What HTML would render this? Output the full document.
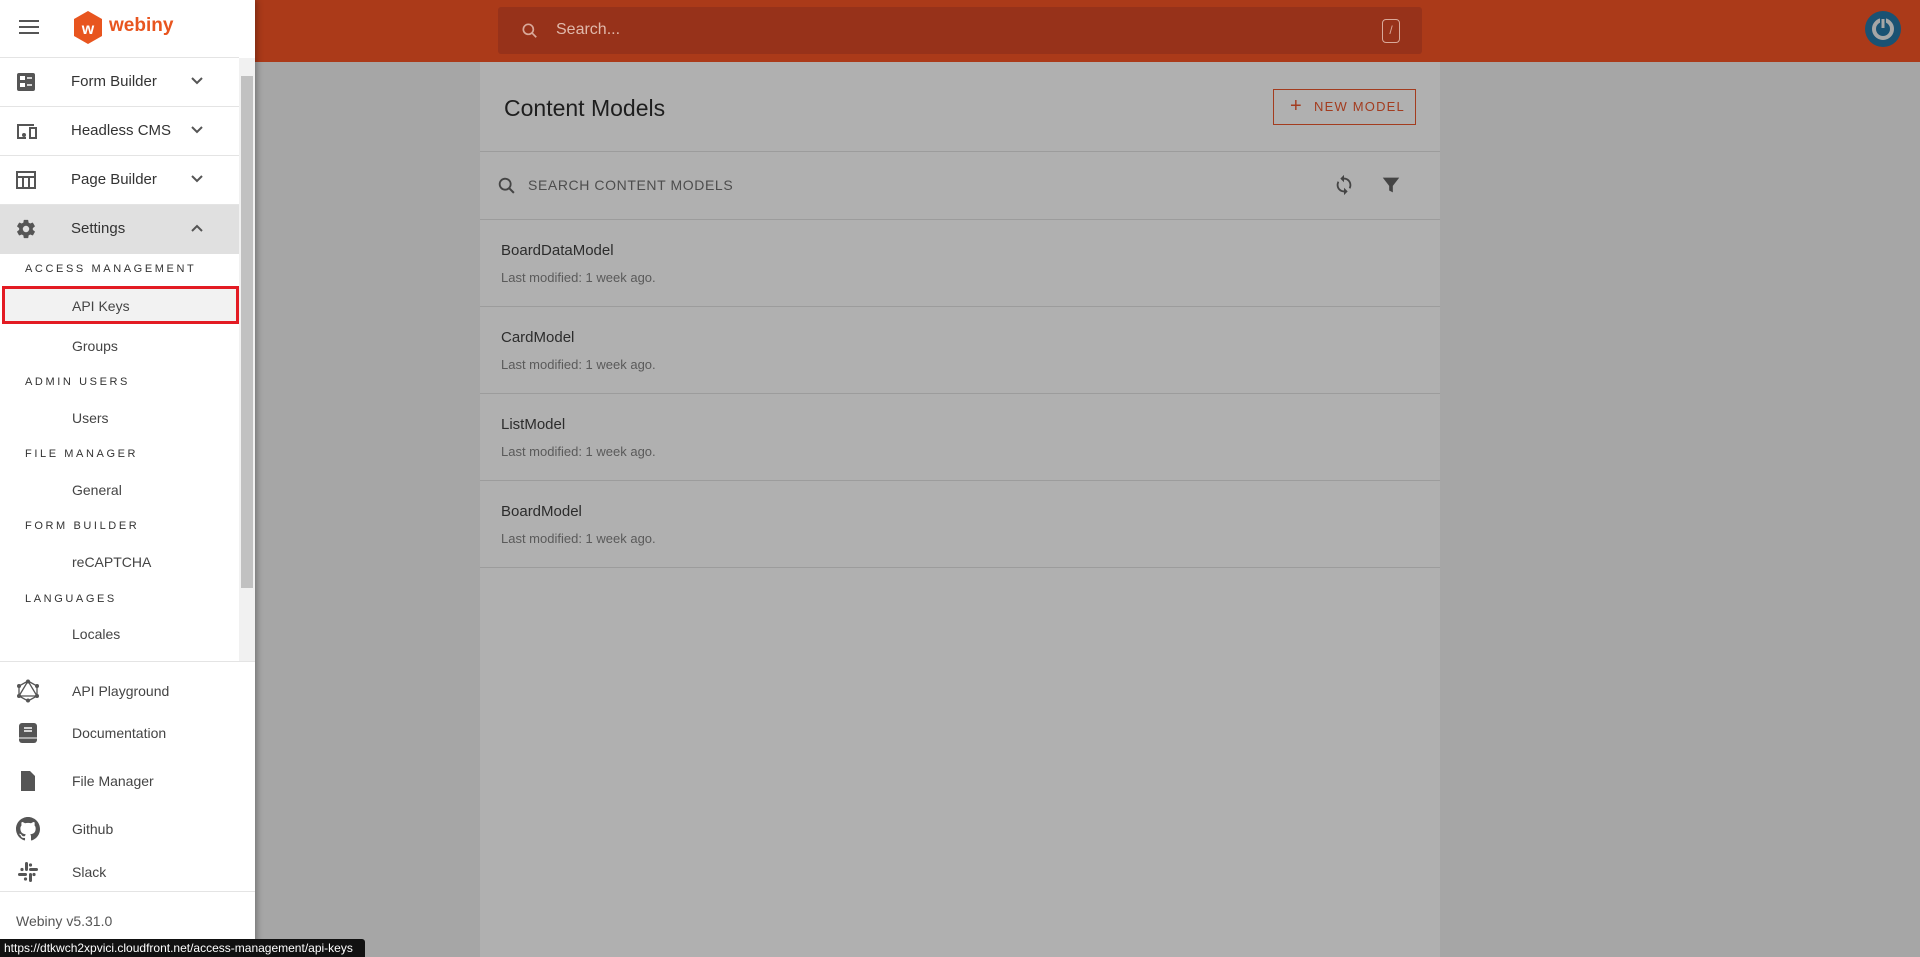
<!DOCTYPE html>
<html><head><meta charset="utf-8"><style>
*{box-sizing:border-box;margin:0;padding:0}
body{width:1920px;height:957px;overflow:hidden;background:#a6a6a6;font-family:"Liberation Sans",sans-serif;position:relative}
.hdr{position:absolute;left:0;top:0;width:1920px;height:62px;background:#ab3a19}
.srch{position:absolute;left:498px;top:7px;width:924px;height:47px;background:#97321a;border-radius:3px}
.srch span{position:absolute;left:58px;top:14px;color:#e0b9ab;font-size:16px}
.slash{position:absolute;right:22px;top:12px;width:18px;height:24px;border:1.5px solid #d9a99a;border-radius:4px;color:#d9a99a;font-size:12px;text-align:center;line-height:21px}
.av{position:absolute;left:1865px;top:11px;width:36px;height:36px;border-radius:50%;background:#1a5273}
.card{position:absolute;left:480px;top:62px;width:960px;height:895px;background:#b0b0b0}
.ttl{position:absolute;left:24px;top:33px;font-size:23px;color:#1e1e1e}
.btn{position:absolute;left:793px;top:27px;width:143px;height:36px;border:1px solid #a33c1f;color:#a33c1f;font-size:13px;letter-spacing:1.2px;line-height:34px;padding-left:40px}
.btn:before{content:"+";position:absolute;left:16px;top:-1px;font-size:20px}
.hl{position:absolute;left:0;width:960px;height:1px;background:#9c9c9c}
.sm{position:absolute;left:48px;top:115px;font-size:14px;color:#4d4d4d;letter-spacing:.6px}
.row{position:absolute;left:21px}
.row b{display:block;font-weight:normal;font-size:15px;color:#2c2c2c}
.row i{display:block;font-style:normal;font-size:13px;color:#5a5a5a;margin-top:11px}
.side{position:absolute;left:0;top:0;width:255px;height:957px;background:#fff;box-shadow:2px 0 6px rgba(0,0,0,.3)}
.it{position:absolute;left:0;width:239px;height:49px;border-bottom:1px solid #e4e4e4;font-size:15px;color:#333}
.it span{position:absolute;left:71px;top:15px}
.it svg.ic{position:absolute;left:15px;top:13px}
.chev{position:absolute;left:190px;top:18px}
.sec{position:absolute;left:25px;font-size:11px;letter-spacing:2.6px;color:#333}
.sub{position:absolute;left:72px;font-size:14px;color:#444}
.bt{position:absolute;left:72px;font-size:14px;color:#444}
.bic{position:absolute;left:16px}
</style></head><body>
<div class="hdr">
 <div class="srch"><svg style="position:absolute;left:22px;top:14px" width="20" height="20" viewBox="0 0 24 24"><circle cx="10" cy="10" r="6" fill="none" stroke="#d9a99a" stroke-width="2"/><path d="M14.5 14.5l5 5" stroke="#d9a99a" stroke-width="2"/></svg><span>Search...</span><div class="slash">/</div></div>
 <div class="av"><svg width="36" height="36" viewBox="0 0 36 36"><circle cx="18" cy="18" r="9" fill="none" stroke="#a6a6a6" stroke-width="4"/><path d="M18 7v10" stroke="#1a5273" stroke-width="6"/><path d="M18 8v9" stroke="#a6a6a6" stroke-width="3"/></svg></div>
</div>
<div class="card">
 <div class="ttl">Content Models</div>
 <div class="btn">NEW MODEL</div>
 <div class="hl" style="top:89px"></div>
 <svg style="position:absolute;left:16px;top:113px" width="22" height="22" viewBox="0 0 24 24"><circle cx="10" cy="10" r="6" fill="none" stroke="#444" stroke-width="2"/><path d="M14.5 14.5l5 5" stroke="#444" stroke-width="2.2"/></svg>
 <div class="sm">SEARCH CONTENT MODELS</div>
 <svg style="position:absolute;left:853px;top:111px" width="22" height="24" viewBox="0 0 24 24"><path d="M12 4V1L8 5l4 4V6c3.3 0 6 2.7 6 6 0 1-.25 2-.7 2.8l1.460 1.46C19.5 15 20 13.6 20 12c0-4.4-3.6-8-8-8zm0 14c-3.3 0-6-2.7-6-6 0-1 .25-2 .7-2.8L5.24 7.74C4.5 9 4 10.4 4 12c0 4.4 3.6 8 8 8v3l4-4-4-4v3z" fill="#444"/></svg>
 <svg style="position:absolute;left:900px;top:112px" width="22" height="22" viewBox="0 0 24 24"><path d="M3 4h18l-7 9v7l-4-2v-5z" fill="#444"/></svg>
 <div class="hl" style="top:157px"></div>
 <div class="row" style="top:180px"><b>BoardDataModel</b><i>Last modified: 1 week ago.</i></div>
 <div class="hl" style="top:244px"></div>
 <div class="row" style="top:267px"><b>CardModel</b><i>Last modified: 1 week ago.</i></div>
 <div class="hl" style="top:331px"></div>
 <div class="row" style="top:354px"><b>ListModel</b><i>Last modified: 1 week ago.</i></div>
 <div class="hl" style="top:418px"></div>
 <div class="row" style="top:441px"><b>BoardModel</b><i>Last modified: 1 week ago.</i></div>
 <div class="hl" style="top:505px"></div>
</div>
<div class="side">
 <svg style="position:absolute;left:19px;top:19px" width="20" height="16" viewBox="0 0 20 16"><path d="M0 2h20M0 8h20M0 14h20" stroke="#555" stroke-width="2"/></svg>
 <svg style="position:absolute;left:73px;top:11px" width="30" height="33" viewBox="0 0 30 33"><path d="M15 0l14 8v17l-14 8-14-8V8z" fill="#e8551f"/><text x="15" y="23" font-size="16" font-weight="bold" fill="#fff" text-anchor="middle" font-family="Liberation Sans">w</text></svg>
 <div style="position:absolute;left:109px;top:15px;font-size:19px;font-weight:bold;color:#e8551f">webiny</div>
 <div style="position:absolute;left:0;top:57px;width:239px;height:1px;background:#e4e4e4"></div>
 <div class="it" style="top:58px"><svg class="ic" width="22" height="22" viewBox="0 0 22 22"><rect x="2" y="2" width="18" height="18" rx="2" fill="#555"/><rect x="5" y="5" width="5" height="4" fill="#fff"/><rect x="5" y="12" width="5" height="4" fill="#fff"/><path d="M12 7h5M12 14h5" stroke="#fff" stroke-width="1.5"/></svg><span>Form Builder</span><svg class="chev" width="14" height="10" viewBox="0 0 14 10"><path d="M2 2l5 5 5-5" fill="none" stroke="#555" stroke-width="2"/></svg></div>
 <div class="it" style="top:107px"><svg class="ic" width="24" height="22" viewBox="0 0 24 22"><path d="M3 17V5h16" fill="none" stroke="#555" stroke-width="2"/><path d="M2 18h9" stroke="#555" stroke-width="2"/><rect x="15" y="8" width="6" height="10" fill="none" stroke="#555" stroke-width="2"/><circle cx="9" cy="15" r="2" fill="#555"/></svg><span>Headless CMS</span><svg class="chev" width="14" height="10" viewBox="0 0 14 10"><path d="M2 2l5 5 5-5" fill="none" stroke="#555" stroke-width="2"/></svg></div>
 <div class="it" style="top:156px"><svg class="ic" width="22" height="22" viewBox="0 0 22 22"><rect x="2" y="3" width="18" height="16" fill="none" stroke="#555" stroke-width="2"/><path d="M2 8h18M8 8v11M14 8v11" stroke="#555" stroke-width="2"/></svg><span>Page Builder</span><svg class="chev" width="14" height="10" viewBox="0 0 14 10"><path d="M2 2l5 5 5-5" fill="none" stroke="#555" stroke-width="2"/></svg></div>
 <div class="it" style="top:205px;background:#e0e0e0;border:0"><svg class="ic" width="22" height="22" viewBox="0 0 24 24"><path d="M19.4 13c.04-.3.06-.6.06-1s-.02-.7-.07-1l2.1-1.65c.2-.15.24-.42.12-.64l-2-3.46c-.12-.22-.39-.3-.61-.22l-2.49 1c-.52-.4-1.08-.73-1.690-.98l-.38-2.650A.49.49 0 0014 2h-4c-.25 0-.46.18-.49.42l-.38 2.65c-.61.25-1.17.59-1.69.98l-2.49-1a.5.5 0 00-.61.22l-2 3.46c-.13.22-.07.49.12.64L4.57 11c-.04.3-.07.66-.07 1s.02.7.07 1l-2.11 1.65c-.19.15-.24.42-.12.64l2 3.46c.12.22.39.3.61.22l2.49-1c.52.4 1.08.73 1.69.98l.38 2.65c.03.24.24.42.49.42h4c.25 0 .46-.18.49-.42l.38-2.65c.61-.25 1.17-.59 1.69-.98l2.49 1c.23.09.49 0 .61-.22l2-3.46c.12-.22.07-.49-.12-.64zM12 15.5A3.5 3.5 0 1112 8.5a3.5 3.5 0 010 7z" fill="#555"/></svg><span>Settings</span><svg class="chev" width="14" height="10" viewBox="0 0 14 10"><path d="M2 8l5-5 5 5" fill="none" stroke="#555" stroke-width="2"/></svg></div>
 <div class="sec" style="top:263px">ACCESS MANAGEMENT</div>
 <div style="position:absolute;left:2px;top:286px;width:237px;height:38px;border:3px solid #e31b23;background:#f2f2f2"></div>
 <div class="sub" style="top:298px">API Keys</div>
 <div class="sub" style="top:338px">Groups</div>
 <div class="sec" style="top:376px">ADMIN USERS</div>
 <div class="sub" style="top:410px">Users</div>
 <div class="sec" style="top:448px">FILE MANAGER</div>
 <div class="sub" style="top:482px">General</div>
 <div class="sec" style="top:520px">FORM BUILDER</div>
 <div class="sub" style="top:554px">reCAPTCHA</div>
 <div class="sec" style="top:593px">LANGUAGES</div>
 <div class="sub" style="top:626px">Locales</div>
 <div style="position:absolute;left:239px;top:58px;width:16px;height:603px;background:#f1f1f1"></div>
 <div style="position:absolute;left:241px;top:76px;width:12px;height:512px;background:#c1c1c1"></div>
 <div style="position:absolute;left:0;top:661px;width:255px;height:1px;background:#e4e4e4"></div>
 <svg class="bic" style="top:679px" width="24" height="24" viewBox="0 0 24 24"><path d="M12 2l9 5v10l-9 5-9-5V7z M12 2L3 17h18z" fill="none" stroke="#555" stroke-width="1.3"/><g fill="#555"><circle cx="12" cy="2.5" r="2"/><circle cx="21" cy="7" r="2"/><circle cx="21" cy="17" r="2"/><circle cx="12" cy="21.5" r="2"/><circle cx="3" cy="17" r="2"/><circle cx="3" cy="7" r="2"/></g></svg>
 <div class="bt" style="top:683px">API Playground</div>
 <svg class="bic" style="top:721px" width="24" height="24" viewBox="0 0 24 24"><rect x="3" y="2" width="18" height="20" rx="3" fill="#555"/><path d="M8 7h8M8 10h8" stroke="#fff" stroke-width="1.5"/><path d="M3 17h18" stroke="#fff" stroke-width="1"/></svg>
 <div class="bt" style="top:725px">Documentation</div>
 <svg class="bic" style="top:769px" width="24" height="24" viewBox="0 0 24 24"><path d="M5 2h9l5 5v15H5z" fill="#555"/></svg>
 <div class="bt" style="top:773px">File Manager</div>
 <svg class="bic" style="top:817px" width="24" height="24" viewBox="0 0 16 16"><path fill="#555" d="M8 0C3.58 0 0 3.58 0 8c0 3.54 2.290 6.53 5.47 7.59.4.07.55-.17.55-.38v-1.33c-2.23.48-2.7-1.07-2.7-1.07-.36-.92-.89-1.17-.89-1.17-.73-.5.06-.49.06-.49.8.06 1.23.83 1.23.83.72 1.22 1.87.87 2.33.66.07-.52.28-.87.51-1.07-1.78-.2-3.64-.89-3.64-3.95 0-.87.31-1.59.82-2.15-.08-.2-.36-1.02.08-2.12 0 0 .67-.21 2.2.82.64-.18 1.32-.27 2-.27s1.36.09 2 .27c1.53-1.04 2.2-.82 2.2-.82.44 1.1.16 1.92.08 2.12.51.56.82 1.27.82 2.15 0 3.07-1.87 3.75-3.65 3.95.29.25.54.73.54 1.48v2.2c0 .21.15.46.55.38A8.01 8.01 0 0016 8c0-4.42-3.58-8-8-8z"/></svg>
 <div class="bt" style="top:821px">Github</div>
 <svg class="bic" style="top:860px" width="24" height="24" viewBox="0 0 24 24"><g fill="#555"><rect x="9" y="2" width="3" height="9" rx="1.5"/><rect x="13" y="13" width="3" height="9" rx="1.5"/><rect x="2" y="13" width="9" height="3" rx="1.5"/><rect x="13" y="8" width="9" height="3" rx="1.5"/><circle cx="6" cy="9.5" r="1.6"/><circle cx="18" cy="14.5" r="1.6"/><circle cx="9.5" cy="19" r="1.6"/><circle cx="14.5" cy="5" r="1.6"/></g></svg>
 <div class="bt" style="top:864px">Slack</div>
 <div style="position:absolute;left:0;top:891px;width:255px;height:1px;background:#e4e4e4"></div>
 <div style="position:absolute;left:16px;top:913px;font-size:14px;color:#555">Webiny v5.31.0</div>
</div>
<div style="position:absolute;left:0;top:939px;width:365px;height:18px;background:#111;color:#fff;font-size:12px;line-height:18px;padding-left:4px;border-top-right-radius:3px;white-space:nowrap">https://dtkwch2xpvici.cloudfront.net/access-management/api-keys</div>
</body></html>
